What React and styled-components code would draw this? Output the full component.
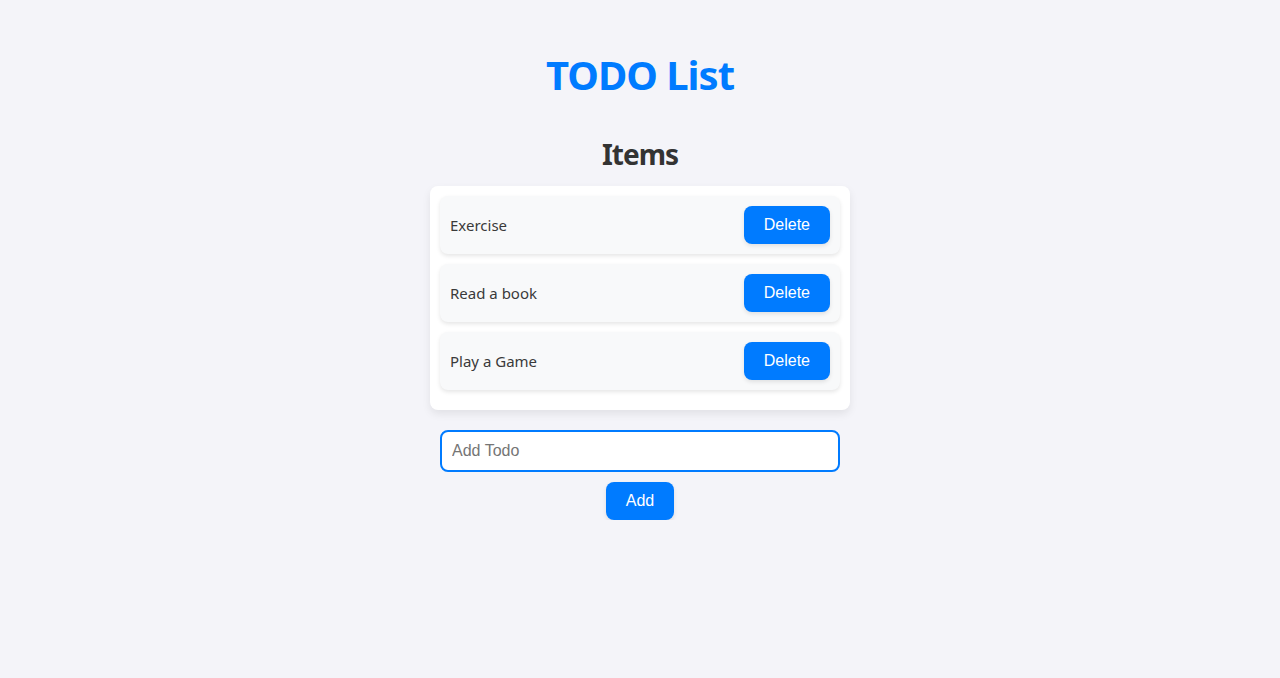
import React, { useState } from "react";
import styled, { createGlobalStyle } from "styled-components";

const Global = createGlobalStyle`
  html, body {
    margin: 0;
    padding: 0;
    background: #f4f4f9;
    font-family: "Noto Sans", "Open Sans", sans-serif;
  }
`;

const Page = styled.div`
  display: flex;
  flex-direction: column;
  align-items: center;
  padding-top: 51px;
`;

const Title = styled.h1`
  margin: 0;
  font-size: 40px;
  line-height: 48px;
  font-weight: 700;
  color: #007bff;
  letter-spacing: -1px;
`;

const Subtitle = styled.h2`
  margin: 38px 0 15px;
  font-size: 28px;
  line-height: 34px;
  font-weight: 700;
  color: #333;
  letter-spacing: -1px;
`;

const Card = styled.div`
  width: 400px;
  padding: 10px;
  background: #fff;
  border-radius: 8px;
  box-shadow: 0 4px 8px rgba(0, 0, 0, 0.08);
  display: flex;
  flex-direction: column;
`;

const Row = styled.div`
  display: flex;
  align-items: center;
  justify-content: space-between;
  height: 58px;
  padding: 0 10px;
  margin-bottom: 10px;
  background: #f8f9fa;
  border-radius: 8px;
  box-shadow: 0 2px 4px rgba(0, 0, 0, 0.1);
`;

const Label = styled.span`
  font-size: 15px;
  color: #3a3a3a;
`;

const Button = styled.button`
  font-family: "Liberation Sans", Arial, sans-serif;
  font-size: 16px;
  line-height: 18px;
  color: #fff;
  background: #007bff;
  border: none;
  border-radius: 8px;
  padding: 10px 20px;
  cursor: pointer;
  box-shadow: 0 2px 4px rgba(0, 0, 0, 0.1);
`;

const Input = styled.input`
  box-sizing: border-box;
  width: 400px;
  height: 42px;
  margin-top: 20px;
  padding: 10px;
  font-family: "Liberation Sans", Arial, sans-serif;
  font-size: 16px;
  border: 2px solid #007bff;
  border-radius: 8px;
  outline: none;
  &::placeholder {
    color: #757575;
  }
`;

const AddButton = styled(Button)`
  margin-top: 10px;
`;

export default function App() {
  const [items, setItems] = useState(["Exercise", "Read a book", "Play a Game"]);
  const [text, setText] = useState("");
  return (
    <Page>
      <Global />
      <Title>TODO List</Title>
      <Subtitle>Items</Subtitle>
      <Card>
        {items.map((it, i) => (
          <Row key={i}>
            <Label>{it}</Label>
            <Button onClick={() => setItems(items.filter((_, j) => j !== i))}>Delete</Button>
          </Row>
        ))}
      </Card>
      <Input placeholder="Add Todo" value={text} onChange={(e) => setText(e.target.value)} />
      <AddButton
        onClick={() => {
          if (text.trim()) {
            setItems([...items, text]);
            setText("");
          }
        }}
      >
        Add
      </AddButton>
    </Page>
  );
}
